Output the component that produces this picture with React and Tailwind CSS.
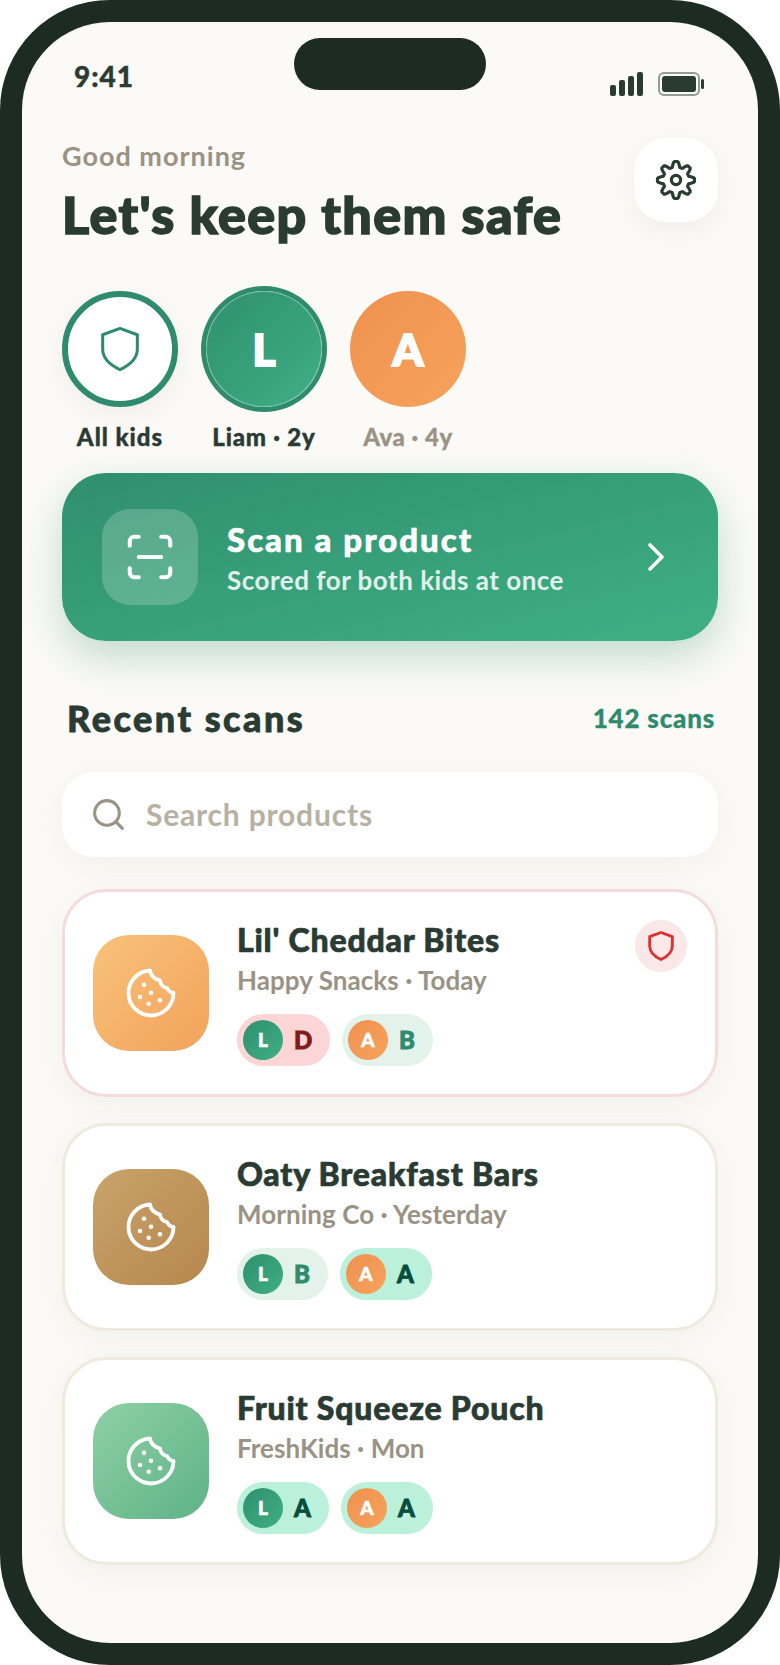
import { ChevronRight, ScanLine, Search } from 'lucide-react'

function ShieldIcon({ className, strokeWidth = 2 }) {
  return (
    <svg viewBox="0 0 24 24" fill="none" stroke="currentColor" strokeWidth={strokeWidth} strokeLinejoin="round" className={className}>
      <path d="M12 2.500 20 5.400V12c0 4.400-3.400 7.400-8 9.500-4.600-2.100-8-5.100-8-9.500V5.400Z" />
    </svg>
  )
}

function CookieIcon() {
  return (
    <svg viewBox="0 0 62 62" fill="none" stroke="currentColor" strokeWidth={3.8} strokeLinejoin="round" className="h-[62px] w-[62px]">
      <path d="M30 8.500Q31 16 40 18.500Q41 25 47 26Q49 30.500 53.500 31A22.500 22.500 0 1 1 30 8.500Z" />
      <g fill="currentColor" stroke="none">
        <circle cx="24" cy="22.700" r="2.300" />
        <circle cx="31" cy="30.700" r="2.300" />
        <circle cx="20" cy="35" r="2.300" />
        <circle cx="40" cy="38.300" r="2.300" />
        <circle cx="28.700" cy="41.700" r="2.300" />
      </g>
    </svg>
  )
}

// 8 rounded lobes around the hub
const gearPoints = Array.from({ length: 144 }, (_, i) => {
  const t = (i / 144) * Math.PI * 2
  const wave = Math.max(-1, Math.min(1, 1.5 * Math.cos(8 * t)))
  const r = 15.8 + 2.7 * wave
  return `${(24 + r * Math.sin(t)).toFixed(2)},${(24 - r * Math.cos(t)).toFixed(2)}`
}).join(' ')

function GearIcon() {
  return (
    <svg viewBox="0 0 48 48" fill="none" stroke="currentColor" strokeWidth={3.2} strokeLinejoin="round" className="h-[48px] w-[48px]">
      <polygon points={gearPoints} />
      <circle cx="24" cy="24" r="4.600" />
    </svg>
  )
}

function SignalBars() {
  return (
    <div className="flex items-end gap-[3px]">
      <div className="h-[11px] w-[6px] rounded-[2px] bg-[#2a3b33]" />
      <div className="h-[16px] w-[6px] rounded-[2px] bg-[#2a3b33]" />
      <div className="h-[20px] w-[6px] rounded-[2px] bg-[#2a3b33]" />
      <div className="h-[24px] w-[6px] rounded-[2px] bg-[#2a3b33]" />
    </div>
  )
}

function KidAvatar({ letter, selected, orange, small }) {
  const color = orange ? 'from-[#f09150] to-[#f5a25c]' : 'from-[#2f8f6f] to-[#3fb084]'
  if (small) {
    return (
      <div className={`flex h-[40px] w-[40px] items-center justify-center rounded-full bg-linear-to-br text-[19px] font-black text-white [-webkit-text-stroke-width:0.6px] ${color}`}>
        {letter}
      </div>
    )
  }
  return (
    <div className={`flex h-[116px] w-[116px] items-center justify-center rounded-full bg-linear-to-br text-[44px] font-black text-white [-webkit-text-stroke-width:2px] ${color} ${selected ? 'shadow-[0_0_0_5px_#2e8b6d,inset_0_0_0_1px_rgba(255,255,255,0.3)]' : ''}`}>
      {letter}
    </div>
  )
}

function Grade({ kid, grade }) {
  const tone = {
    A: 'w-[92px] bg-[#bbf0da] text-[#064e3b]',
    B: 'w-[91px] bg-[#e3f3ec] text-[#2e8b6d]',
    D: 'w-[93px] bg-[#fcd5d7] text-[#7f1d1d]',
  }[grade]
  return (
    <div className={`flex h-[52px] items-center gap-[11px] rounded-full pl-[6px] text-[24px] font-black ${tone}`}>
      <KidAvatar letter={kid} orange={kid === 'A'} small />
      <span className="[-webkit-text-stroke-width:0.9px]">{grade}</span>
    </div>
  )
}

function ScanCard({ name, meta, tile, border, grades, alert }) {
  return (
    <div className={`relative flex h-[208px] items-center rounded-[44px] border-[3px] bg-white pl-[28px] shadow-[0_8px_32px_rgba(60,50,30,0.05)] ${border}`}>
      <div className={`flex h-[116px] w-[116px] items-center justify-center rounded-[36px] bg-linear-to-br text-white ${tile}`}>
        <CookieIcon />
      </div>
      <div className="ml-[28px]">
        <p className="text-[32px] leading-[40px] font-black tracking-[0.8px] text-[#2a3b33] [-webkit-text-stroke-width:0.7px]">{name}</p>
        <p className="mt-[3px] text-[26px] leading-[34px] font-bold tracking-[0.05px] text-[#9a9283]">{meta}</p>
        <div className="mt-[17px] flex gap-[12px]">
          <Grade kid="L" grade={grades[0]} />
          <Grade kid="A" grade={grades[1]} />
        </div>
      </div>
      {alert && (
        <div className="absolute top-[28px] right-[28px] flex h-[52px] w-[52px] items-center justify-center rounded-full bg-[#fae8e8] text-[#dc2f2f]">
          <ShieldIcon className="h-[34px] w-[34px]" />
        </div>
      )}
    </div>
  )
}

export default function App() {
  return (
    <div className="h-[1665px] w-[780px] bg-white font-['Lato',sans-serif]">
      <div className="relative h-full rounded-[110px] bg-[#1c2b24] p-[22px]">
        <div className="h-full overflow-hidden rounded-[88px] bg-[#fbfaf6]">
          {/* Notch */}
          <div className="absolute top-[38px] left-[294px] h-[52px] w-[192px] rounded-full bg-[#1c2b24]" />

          {/* Status bar */}
          <div className="flex items-start justify-between pt-[38px] pr-[54px] pl-[52px]">
            <span className="text-[28px] leading-[32px] font-black tracking-[1px] text-[#2a3b33] [-webkit-text-stroke-width:0.4px]">9:41</span>
            <div className="mt-[12px] flex items-end gap-[15px]">
              <SignalBars />
              <div className="flex items-center gap-[1px]">
                <div className="h-[24px] w-[42px] rounded-[6px] border-2 border-[#929c96] p-[2px]">
                  <div className="h-full rounded-[3px] bg-[#2a3b33]" />
                </div>
                <div className="h-[10px] w-[3px] rounded-full bg-[#2a3b33]" />
              </div>
            </div>
          </div>

          <div className="px-[40px]">
            {/* Header */}
            <div className="mt-[42px] flex justify-between">
              <div>
                <p className="text-[27px] leading-[36px] font-bold tracking-[1px] text-[#9a9283]">Good morning</p>
                <h1 className="mt-[6px] text-[52px] leading-[68px] font-black tracking-[1.4px] whitespace-nowrap text-[#2a3b33] [-webkit-text-stroke-width:1.6px]">Let's keep them safe</h1>
              </div>
              <div className="flex h-[84px] w-[84px] items-center justify-center rounded-[32px] bg-white text-[#2a3b33] shadow-[0_8px_24px_rgba(60,50,30,0.06)]">
                <GearIcon />
              </div>
            </div>

            {/* Kids */}
            <div className="mt-[43px] flex gap-[28px]">
              <div className="flex w-[116px] flex-col items-center">
                <div className="flex h-[116px] w-[116px] items-center justify-center rounded-full border-[6px] border-[#2e8b6d] bg-white text-[#2e8b6d] shadow-[0_8px_24px_rgba(60,50,30,0.06)]">
                  <ShieldIcon className="h-[52px] w-[52px]" strokeWidth={1.4} />
                </div>
                <span className="mt-[14px] text-[24px] leading-[32px] font-black tracking-[1px] whitespace-nowrap text-[#2a3b33] [-webkit-text-stroke-width:0.4px]">All kids</span>
              </div>
              <div className="flex w-[116px] flex-col items-center">
                <KidAvatar letter="L" selected />
                <span className="mt-[14px] text-[24px] leading-[32px] font-black tracking-[0.8px] whitespace-nowrap text-[#2a3b33] [-webkit-text-stroke-width:0.4px]">Liam · 2y</span>
              </div>
              <div className="flex w-[116px] flex-col items-center">
                <KidAvatar letter="A" orange />
                <span className="mt-[14px] text-[24px] leading-[32px] font-black tracking-[0.5px] whitespace-nowrap text-[#9a9283] [-webkit-text-stroke-width:0.3px]">Ava · 4y</span>
              </div>
            </div>

            {/* Scan CTA */}
            <div className="mt-[20px] flex h-[168px] items-center rounded-[44px] bg-linear-to-br from-[#2f8f6f] to-[#3fb084] pr-[38px] pl-[40px] shadow-[0_16px_40px_rgba(46,139,109,0.28)]">
              <div className="flex h-[96px] w-[96px] items-center justify-center rounded-[28px] bg-white/20 text-white">
                <ScanLine size={54} strokeWidth={1.8} />
              </div>
              <div className="ml-[29px] flex-1 text-white">
                <p className="text-[33px] leading-[40px] font-black tracking-[2px] [-webkit-text-stroke-width:0.6px]">Scan a product</p>
                <p className="mt-[5px] text-[26px] leading-[32px] font-bold tracking-[0.5px] text-white/85">Scored for both kids at once</p>
              </div>
              <ChevronRight size={48} strokeWidth={1.8} className="text-white" />
            </div>

            {/* Recent scans */}
            <div className="mt-[53px] flex items-center justify-between pr-[3px] pl-[5px]">
              <h2 className="text-[36px] leading-[48px] font-black tracking-[2.5px] text-[#2a3b33] [-webkit-text-stroke-width:0.8px]">Recent scans</h2>
              <span className="text-[26px] leading-[36px] font-black tracking-[0.8px] text-[#2e8b6d] [-webkit-text-stroke-width:0.3px]">142 scans</span>
            </div>

            {/* Search */}
            <div className="mt-[30px] flex h-[85px] items-center rounded-[32px] bg-white pl-[28px] shadow-[0_8px_32px_rgba(60,50,30,0.05)]">
              <Search size={37} strokeWidth={2} className="text-[#9a9283]" />
              <span className="mb-[1px] ml-[19px] text-[30px] font-bold tracking-[0.8px] text-[#b8b1a3]">Search products</span>
            </div>

            {/* Results */}
            <div className="mt-[32px] flex flex-col gap-[26px]">
              <ScanCard name="Lil' Cheddar Bites" meta="Happy Snacks · Today" tile="from-[#f8c27a] to-[#f2a25b]" border="border-[#f5dcdc]" grades={['D', 'B']} alert />
              <ScanCard name="Oaty Breakfast Bars" meta="Morning Co · Yesterday" tile="from-[#c9a26b] to-[#b5884d]" border="border-[#efe9de]" grades={['B', 'A']} />
              <ScanCard name="Fruit Squeeze Pouch" meta="FreshKids · Mon" tile="from-[#8ed0a6] to-[#5fb287]" border="border-[#efe9de]" grades={['A', 'A']} />
            </div>
          </div>
        </div>
      </div>
    </div>
  )
}
